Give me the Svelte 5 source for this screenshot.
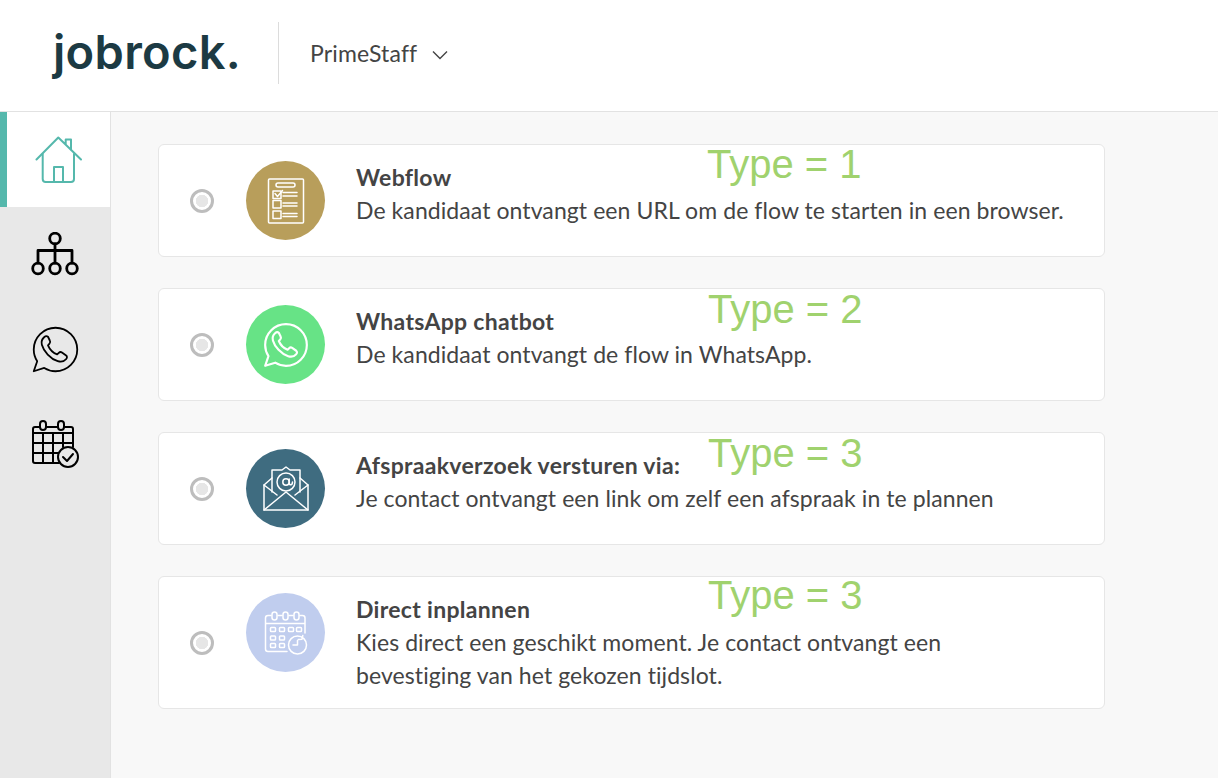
<script>
  // Flow type picker: top bar, icon rail and a list of option cards.
  const options = [
    { kind: "web", title: "Webflow", text: "De kandidaat ontvangt een URL om de flow te starten in een browser.", type: "Type = 1", left: 548, top: -4 },
    { kind: "wa", title: "WhatsApp chatbot", text: "De kandidaat ontvangt de flow in WhatsApp.", type: "Type = 2", left: 549, top: -3 },
    { kind: "mail", title: "Afspraakverzoek versturen via:", text: "Je contact ontvangt een link om zelf een afspraak in te plannen", type: "Type = 3", left: 549, top: -3 },
    { kind: "cal", title: "Direct inplannen", text: "Kies direct een geschikt moment. Je contact ontvangt een bevestiging van het gekozen tijdslot.", type: "Type = 3", left: 549, top: -5 },
  ];
  const phone = "M25 10.500c-8 0-14.500 6.500-14.500 14.500 0 2.900.8 5.500 2.300 7.800L10.500 39.500l7-2.200c2.200 1.400 4.800 2.200 7.500 2.200 8 0 14.500-6.500 14.500-14.500S33 10.500 25 10.500z";
  const handset = "M20 16.500c-.8-.6-1.800-.4-2.600.3-1.500 1.300-2 3-1.500 5 1.200 4.400 5.700 9.400 10.600 11 2.200.7 4.200.2 5.500-1.300.8-.9.9-1.900.1-2.500l-2.800-2c-.7-.5-1.500-.4-2.100.2l-1.100 1.100c-2.800-1.100-5-3.500-6.100-6.100l1-1.100c.6-.6.600-1.400.2-2.100z";
</script>

{#snippet wa()}
  <path d={phone} />
  <path d={handset} />
{/snippet}

<div class="page">
  <header>
    <div class="logo">jobrock.</div>
    <div class="org">
      <span>PrimeStaff</span>
      <svg width="16" height="10" viewBox="0 0 16 10"><path d="M1 1.500l7 7 7-7" /></svg>
    </div>
  </header>

  <div class="body">
    <nav>
      <div class="item active">
        <svg width="48" height="50" viewBox="0 0 48 50" class="teal">
          <path d="M2.500 24.500L24.300 2.500 47 24.500M31.700 9.500V4.500H37V15" />
          <path d="M8.700 19v25c0 2 1 3 3 3h25.300c2 0 3-1 3-3V19M20 47V32h9v15" />
        </svg>
      </div>
      <div class="item">
        <svg width="48" height="46" viewBox="0 0 48 46" class="black">
          <circle cx="24" cy="6.500" r="5.300" />
          <path d="M24 12v19M7 31V18.500h34V31" />
          <circle cx="7" cy="36.500" r="5.300" /><circle cx="24" cy="36.500" r="5.300" /><circle cx="41" cy="36.500" r="5.300" />
        </svg>
      </div>
      <div class="item">
        <svg width="51" height="51" viewBox="8 8 34 34" class="black thin">{@render wa()}</svg>
      </div>
      <div class="item cal-item">
        <svg width="48" height="48" viewBox="0 0 48 48" class="black grid">
          <path d="M7 7H3C2 7 1 8 1 9v32c0 1 1 2 2 2h24M15 7h10M33 7h6c1 0 2 1 2 2v18" />
          <rect x="8" y="1" width="6" height="9" rx="3" /><rect x="26" y="1" width="6" height="9" rx="3" />
          <path d="M1 13h40M1 23h40M1 33h26M11 13v30M21 13v30M31 13v14" />
          <circle cx="36" cy="37" r="10" fill="#e8e8e8" />
          <path d="M31 37l4 4 6-7" />
        </svg>
      </div>
    </nav>

    <main>
      {#each options as o}
        <section class="card">
          <span class="radio"></span>
          <div class="badge {o.kind}">
            {#if o.kind === "web"}
              <svg width="38" height="46" viewBox="0 0 38 46">
                <rect x="1.500" y="1" width="35" height="44" rx="1" />
                <rect x="9" y="5" width="19" height="4" rx="2" />
                <rect x="6" y="13" width="8" height="7.500" /><path d="M16 14.500h14M16 18h14M8 15.500l2.500 3 5-6" />
                <rect x="6" y="22.500" width="8" height="7.500" /><path d="M16 25h14M16 28h14" />
                <rect x="6" y="33" width="8" height="7.500" /><path d="M16 35.500h14M16 38.500h14" />
              </svg>
            {:else if o.kind === "wa"}
              <svg width="46" height="46" viewBox="9 9 32 32">{@render wa()}</svg>
            {:else if o.kind === "mail"}
              <svg width="46" height="46" viewBox="0 0 46 46">
                <path d="M9 26V4h10l4-3 4 3h10v22" />
                <path d="M9 12l-8 7v25h44V19l-8-7" />
                <path d="M1 44l22-18 22 18M1 19l13 10M45 19L32 29" />
                <circle cx="23" cy="16" r="9" /><circle cx="23" cy="16" r="3.200" />
                <path d="M26.200 13v4c0 2.500 3.300 2.500 3.300-1" />
              </svg>
            {:else}
              <svg width="44" height="44" viewBox="0 0 44 44">
                <path d="M7 4.500H4c-1.500 0-2.500 1-2.500 2.500v31c0 1.500 1 2.500 2.500 2.500h19M14 4.500h4M25 4.500h4M36 4.500h2.500c1.500 0 2.500 1 2.500 2.500v15M1.500 12.500H41" />
                <rect x="8" y="1" width="5" height="8" rx="2.500" /><rect x="19" y="1" width="5" height="8" rx="2.500" /><rect x="30" y="1" width="5" height="8" rx="2.500" />
                <rect x="6.500" y="16.500" width="5" height="4" rx=".8" /><rect x="15.500" y="16.500" width="5" height="4" rx=".8" /><rect x="24.500" y="16.500" width="5" height="4" rx=".8" /><rect x="32.500" y="16.500" width="5" height="4" rx=".8" />
                <rect x="6.500" y="25" width="5" height="4" rx=".8" /><rect x="15.500" y="25" width="5" height="4" rx=".8" />
                <rect x="6.500" y="32.500" width="5" height="4" rx=".8" /><rect x="15.500" y="32.500" width="5" height="4" rx=".8" />
                <circle cx="33.500" cy="34" r="9" fill="#c0cdee" />
                <path d="M38.800 24.500l-.8 3.700-3.600.4M33.500 29.500v4.500H29" />
              </svg>
            {/if}
          </div>
          <div class="copy">
            <h3>{o.title}</h3>
            <p>{o.text}</p>
          </div>
          <span class="type" style="left:{o.left}px;top:{o.top}px">{o.type}</span>
        </section>
      {/each}
    </main>
  </div>
</div>

<style>
  :global(body) { background: #f8f8f8; }
  .page {
    height: 778px;
    overflow: hidden;
    display: flex;
    flex-direction: column;
    font-family: Lato, "Open Sans", sans-serif;
    color: #444;
  }
  header {
    height: 111px;
    flex: none;
    display: flex;
    align-items: center;
    background: #fff;
    border-bottom: 1px solid #e2e2e2;
  }
  .logo {
    width: 227px;
    box-sizing: border-box;
    padding-left: 53px;
    margin-top: -9px;
    font-family: Inter, sans-serif;
    font-size: 47px;
    font-weight: 600;
    letter-spacing: .3px;
    color: #1c3a43;
    line-height: 1;
  }
  .org {
    margin-left: 51px;
    height: 62px;
    margin-top: -6px;
    border-left: 1px solid #dcdcdc;
    padding-left: 31px;
    display: flex;
    align-items: center;
    gap: 15px;
    font-size: 23px;
    letter-spacing: .15px;
  }
  .org svg { fill: none; stroke: #444; stroke-width: 1.4; margin-top: 4px; }
  .body { flex: 1; display: flex; min-height: 0; }
  nav {
    width: 111px;
    box-sizing: border-box;
    flex: none;
    background: #e8e8e8;
    border-right: 1px solid #e2e2e2;
  }
  .item {
    height: 95px;
    display: flex;
    align-items: center;
    justify-content: center;
    box-sizing: border-box;
  }
  .item.active {
    background: #fff;
    border-left: 7px solid #55b8ac;
    padding-right: 1px;
  }
  .cal-item { margin-top: -1px; padding-left: 2px; }
  nav svg { fill: none; stroke-linecap: round; stroke-linejoin: round; }
  .teal { stroke: #55b8ac; stroke-width: 2; }
  .black { stroke: #000; stroke-width: 2.800; }
  .thin { stroke-width: 1.200; }
  .grid { stroke-width: 2; }
  main {
    flex: 1;
    padding: 32px 0 0 47px;
    display: flex;
    flex-direction: column;
    gap: 31px;
  }
  .card {
    position: relative;
    width: 947px;
    min-height: 113px;
    box-sizing: border-box;
    display: flex;
    align-items: center;
    padding: 16px 30px 16px 31px;
    background: #fff;
    border: 1px solid #e6e6e6;
    border-radius: 6px;
  }
  .radio {
    flex: none;
    width: 18px;
    height: 18px;
    border: 3px solid #bdbdbd;
    border-radius: 50%;
    background: radial-gradient(circle, #e6e6e6 0 6px, #fff 6.500px);
    margin-right: 32px;
  }
  .badge {
    flex: none;
    width: 79px;
    height: 79px;
    border-radius: 50%;
    display: flex;
    align-items: center;
    justify-content: center;
    margin-right: 31px;
    align-self: flex-start;
  }
  .badge svg { fill: none; stroke: #fff; stroke-width: 1.500; stroke-linecap: round; stroke-linejoin: round; }
  .web { background: #b89e5b; }
  .wa { background: #67e386; }
  .mail { background: #3f6c80; }
  .cal { background: #c0cdee; }
  .copy { max-width: 610px; flex: 1; align-self: flex-start; }
  .web ~ .copy p, .mail ~ .copy p { white-space: nowrap; }
  h3 { margin: 0; font-size: 23px; font-weight: 700; line-height: 33px; letter-spacing: .3px; }
  p { margin: 0; font-size: 23px; line-height: 33px; color: #444; letter-spacing: .08px; }
  .type {
    position: absolute;
    font-family: "Liberation Sans", Arial, sans-serif;
    font-size: 40px;
    line-height: 46px;
    color: #a0d26e;
  }
</style>
